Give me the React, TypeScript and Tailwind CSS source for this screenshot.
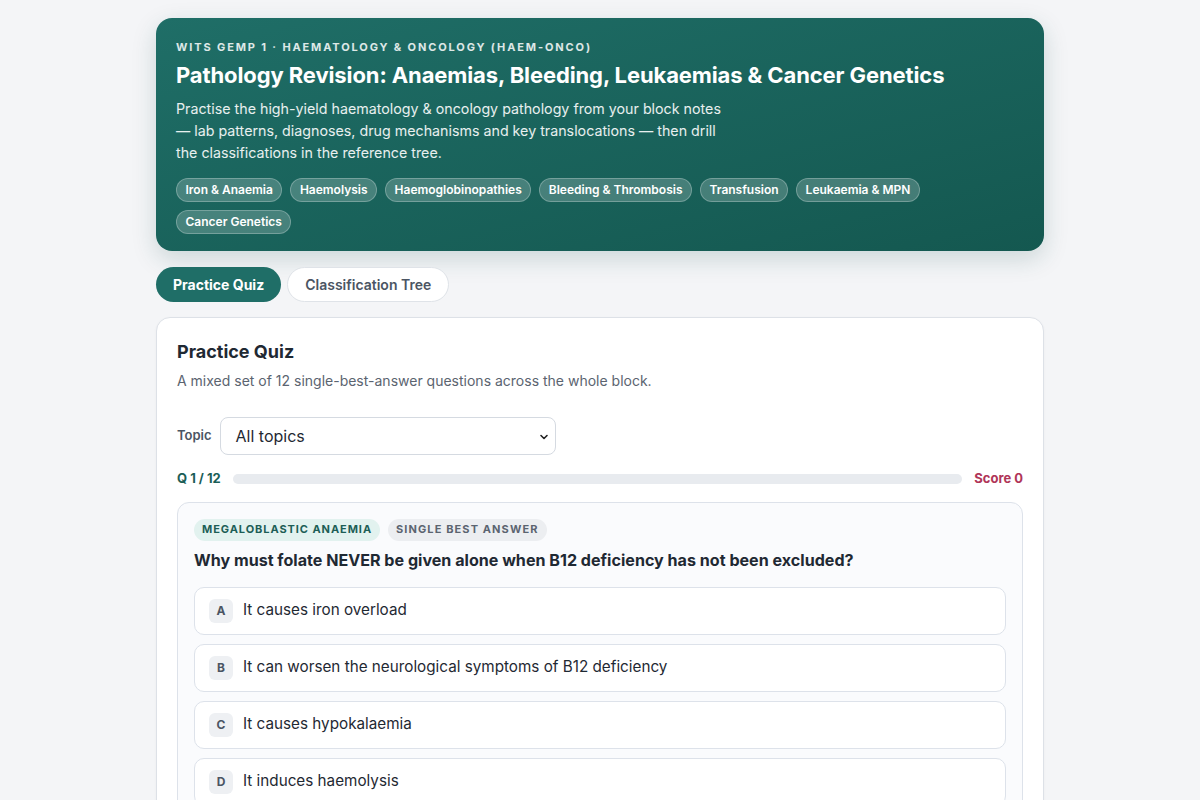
import React from "react";

const chips = [
  "Iron & Anaemia",
  "Haemolysis",
  "Haemoglobinopathies",
  "Bleeding & Thrombosis",
  "Transfusion",
  "Leukaemia & MPN",
  "Cancer Genetics",
];

const options = [
  ["A", "It causes iron overload"],
  ["B", "It can worsen the neurological symptoms of B12 deficiency"],
  ["C", "It causes hypokalaemia"],
  ["D", "It induces haemolysis"],
];

export default function App() {
  return (
    <div
      className="min-h-screen bg-[#f4f5f7] text-[#1f2933]"
      style={{ fontFamily: "Inter, 'Noto Sans', Arial, sans-serif" }}
    >
      <div className="mx-auto w-[888px] pt-[18px] pb-10">
        <header className="rounded-[16px] bg-gradient-to-br from-[#1f6e67] to-[#145850] px-5 pt-[22px] pb-[17px] text-white shadow-[0_8px_24px_rgba(20,80,75,0.18)]">
          <div className="text-[11px] font-bold uppercase tracking-[0.17em] text-white/85 leading-[14px]">
            Wits GEMP 1 · Haematology &amp; Oncology (Haem-Onco)
          </div>
          <h1 className="mt-[7px] text-[22px] font-bold leading-[29px] tracking-[-0.005em]">
            Pathology Revision: Anaemias, Bleeding, Leukaemias &amp; Cancer Genetics
          </h1>
          <p className="mt-[8px] max-w-[560px] text-[14.25px] leading-[22px] text-white/90">
            Practise the high-yield haematology &amp; oncology pathology from your block notes — lab patterns, diagnoses, drug mechanisms and key translocations — then drill the classifications in the reference tree.
          </p>
          <div className="mt-[14px] flex flex-wrap gap-x-[8px] gap-y-[8px]">
            {chips.map((c) => (
              <span
                key={c}
                className="rounded-full border border-white/25 bg-white/20 px-[8.5px] h-[24px] flex items-center text-[12px] font-semibold text-white"
              >
                {c}
              </span>
            ))}
          </div>
        </header>

        <div className="mt-[16px] flex gap-[6px]">
          <button className="h-[35px] rounded-full bg-[#1f6e67] px-[17px] text-[14px] font-bold text-white">
            Practice Quiz
          </button>
          <button className="h-[35px] rounded-full border border-[#dfe3e8] bg-white px-[17px] text-[14px] font-semibold text-[#4b5563]">
            Classification Tree
          </button>
        </div>

        <section className="mt-[15px] rounded-[14px] border border-[#dde1e7] bg-white px-5 pt-[22px] pb-6 shadow-[0_1px_3px_rgba(0,0,0,0.04)]">
          <h2 className="text-[18px] font-bold leading-[24px] text-[#1f2933]">Practice Quiz</h2>
          <p className="mt-[7px] text-[14px] leading-[20px] text-[#5b6470]">
            A mixed set of 12 single-best-answer questions across the whole block.
          </p>

          <div className="mt-[26px] flex items-center gap-[8px]">
            <span className="text-[13px] font-semibold text-[#4b5563]">Topic</span>
            <div className="relative w-[336px] h-[38px] rounded-[8px] border border-[#d5dae1] bg-white flex items-center px-[15px]">
              <span className="text-[16px] text-[#1f2933]">All topics</span>
              <svg className="absolute right-[6px] top-[14px]" width="10" height="10" viewBox="0 0 10 10">
                <path d="M2 3.5 L5 6.5 L8 3.5" fill="none" stroke="#222" strokeWidth="1.6" strokeLinecap="round" strokeLinejoin="round" />
              </svg>
            </div>
          </div>

          <div className="mt-[14px] flex items-center gap-[12px]">
            <span className="text-[13px] font-bold text-[#1b5e57]">Q 1 / 12</span>
            <div className="h-[10px] flex-1 rounded-full bg-[#e8ebef]" />
            <span className="text-[13px] font-bold text-[#b03558]">Score 0</span>
          </div>

          <div className="mt-[13px] rounded-[12px] border border-[#dde2ea] bg-[#fafbfd] px-4 pt-[16px] pb-4">
            <div className="flex gap-[8px]">
              <span className="h-[22px] flex items-center rounded-full bg-[#e2f2ef] px-[8px] text-[11px] font-bold uppercase tracking-[0.085em] text-[#1d5e56]">
                Megaloblastic anaemia
              </span>
              <span className="h-[22px] flex items-center rounded-full bg-[#eceef1] px-[8px] text-[11px] font-bold uppercase tracking-[0.1em] text-[#5b6470]">
                Single best answer
              </span>
            </div>
            <div className="mt-[8px] text-[16.1px] font-bold leading-[22px] text-[#1f2933]">
              Why must folate NEVER be given alone when B12 deficiency has not been excluded?
            </div>
            <div className="mt-[16px] flex flex-col gap-[9px]">
              {options.map(([l, t]) => (
                <div
                  key={l}
                  className="flex h-[48px] items-center gap-[10px] rounded-[10px] border border-[#dde2ea] bg-white px-[14px]"
                >
                  <span className="flex h-[24px] w-[24px] items-center justify-center rounded-[6px] bg-[#eef0f3] text-[12px] font-bold text-[#4b5563]">
                    {l}
                  </span>
                  <span className="text-[15.25px] text-[#1f2933]">{t}</span>
                </div>
              ))}
            </div>
          </div>
        </section>
      </div>
    </div>
  );
}
